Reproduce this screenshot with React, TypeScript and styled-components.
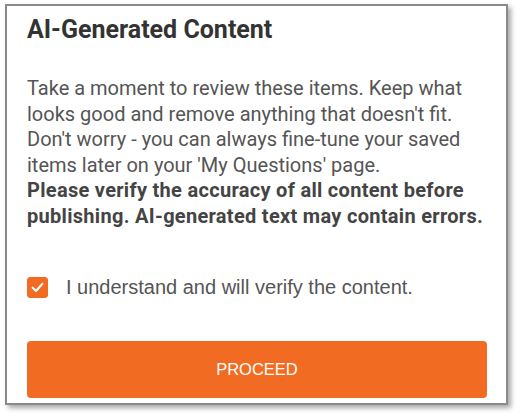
import React, { useState } from 'react'
import styled, { createGlobalStyle } from 'styled-components'

const GlobalStyle = createGlobalStyle`
  html, body {
    margin: 0;
    padding: 0;
    background: #ffffff;
  }
`

const Page = styled.div`
  width: 522px;
  height: 420px;
  padding: 4px 0 0 5px;
  box-sizing: border-box;
`

const Card = styled.div`
  width: 503px;
  height: 401px;
  box-sizing: border-box;
  border: 2px solid #8a8a8a;
  background: #fff;
  box-shadow: 3px 3px 5px rgba(0, 0, 0, 0.35);
  padding: 10px 16px 0 20px;
  display: flex;
  flex-direction: column;
`

const Title = styled.h2`
  margin: 0;
  font-family: Roboto, 'Liberation Sans', sans-serif;
  font-weight: 700;
  font-size: 25px;
  line-height: 28px;
  color: #333;
`

const Body = styled.div`
  margin-top: 32px;
  font-family: Roboto, 'Liberation Sans', sans-serif;
  font-size: 20px;
  line-height: 25.5px;
  color: #555;
`

const Line = styled.p<{ $strong?: boolean }>`
  margin: 0;
  font-weight: ${({ $strong }) => ($strong ? 700 : 400)};
  color: ${({ $strong }) => ($strong ? '#444' : 'inherit')};
  letter-spacing: ${({ $strong }) => ($strong ? '0.3px' : '0')};
`

const CheckRow = styled.label`
  display: flex;
  align-items: center;
  gap: 18px;
  margin-top: 47px;
  cursor: pointer;
`

const Box = styled.span<{ $checked: boolean }>`
  width: 21px;
  height: 21px;
  flex: none;
  border-radius: 3px;
  box-sizing: border-box;
  background: ${({ $checked }) => ($checked ? '#f26b22' : '#fff')};
  border: 1px solid ${({ $checked }) => ($checked ? '#f26b22' : '#888')};
  display: flex;
  align-items: center;
  justify-content: center;
`

const CheckLabel = styled.span`
  font-family: 'Liberation Sans', Arial, sans-serif;
  font-size: 20px;
  line-height: 23px;
  color: #555;
`

const ProceedButton = styled.button`
  margin-top: 42px;
  width: 460px;
  height: 57px;
  border: none;
  border-radius: 4px;
  background: #f26b22;
  color: #fff;
  font-family: 'Liberation Sans', Arial, sans-serif;
  font-size: 16.5px;
  cursor: pointer;
`

const App = () => {
  const [checked, setChecked] = useState(true)

  return (
    <>
      <GlobalStyle />
      <Page>
        <Card>
          <Title>AI-Generated Content</Title>
          <Body>
            <Line>
              Take a moment to review these items. Keep what looks good and remove anything that
              doesn't fit. Don't worry - you can always fine-tune your saved items later on your
              'My Questions' page.
            </Line>
            <Line $strong>
              Please verify the accuracy of all content before publishing. AI-generated text may
              contain errors.
            </Line>
          </Body>
          <CheckRow onClick={() => setChecked(!checked)}>
            <Box $checked={checked}>
              {checked && (
                <svg width="15" height="15" viewBox="0 0 14 14">
                  <path
                    d="M2.5 7.2 L5.6 10.2 L11.5 3.6"
                    fill="none"
                    stroke="#fff"
                    strokeWidth="2"
                    strokeLinecap="round"
                    strokeLinejoin="round"
                  />
                </svg>
              )}
            </Box>
            <CheckLabel>I understand and will verify the content.</CheckLabel>
          </CheckRow>
          <ProceedButton>PROCEED</ProceedButton>
        </Card>
      </Page>
    </>
  )
}

export default App
